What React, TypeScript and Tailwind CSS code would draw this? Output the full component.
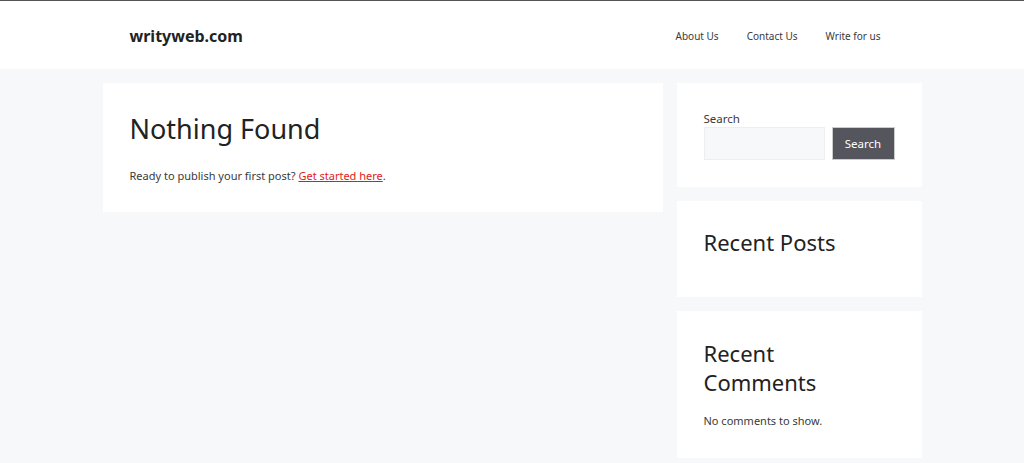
export default function App() {
  return (
    <div
      className="min-h-[463px] bg-[#f7f8f9] text-[#3a3a3a]"
      style={{ fontFamily: '"Noto Sans", "Open Sans", sans-serif' }}
    >
      {/* Header */}
      <header className="border-t border-[#555] bg-white">
        <div className="mx-auto flex h-[68px] w-[819px] items-center justify-between px-[27px] pt-[2px]">
          <div className="text-[16px] font-bold text-[#222]">writyweb.com</div>
          <nav className="flex text-[10px] text-[#3a3a3a]">
            <a className="px-[14px]">About Us</a>
            <a className="px-[14px]">Contact Us</a>
            <a className="px-[14px]">Write for us</a>
          </nav>
        </div>
      </header>

      {/* Content */}
      <div className="mx-auto flex w-[819px] items-start gap-[14px] pt-[14px]">
        <main className="w-[560px] bg-white px-[27px] pb-[26px] pt-[26px]">
          <h1 className="text-[27px] leading-[40px] text-[#222]">Nothing Found</h1>
          <p className="mt-[17px] text-[11px] leading-[20px]">
            Ready to publish your first post?{' '}
            <a className="text-[#e21a1a] underline">Get started here</a>.
          </p>
        </main>

        <aside className="flex w-[245px] flex-col gap-[14px]">
          <section className="h-[104px] bg-white px-[27px] pt-[28px]">
            <label className="block text-[11.5px] leading-[16px]">Search</label>
            <div className="flex gap-[7px]">
              <input className="h-[33px] w-[121px] border border-[#eeeeee] bg-[#f7f8f9] outline-none" />
              <button className="h-[33px] w-[64px] border border-[#cccccc] bg-[#55555e] text-[11.5px] text-white">
                Search
              </button>
            </div>
          </section>

          <section className="h-[96px] bg-white px-[27px] pt-[27px]">
            <h2 className="text-[22px] leading-[29px] text-[#222]">Recent Posts</h2>
          </section>

          <section className="h-[147px] bg-white px-[27px] pt-[28px]">
            <h2 className="text-[22px] leading-[29px] text-[#222]">
              Recent
              <br />
              Comments
            </h2>
            <p className="mt-[14px] text-[11px] leading-[20px]">No comments to show.</p>
          </section>
        </aside>
      </div>
    </div>
  );
}
